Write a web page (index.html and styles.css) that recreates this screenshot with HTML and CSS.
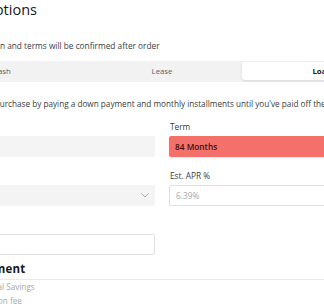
FILE: index.html
```html
<!DOCTYPE html>
<html lang="en">
<head>
    <meta charset="UTF-8">
    <meta name="viewport" content="width=device-width, initial-scale=1.0">
    <title>Payment Options</title>
    <link rel="stylesheet" href="styles.css">
</head>
<body>
    <div class="page">
        <h1>Payment Options</h1>
        <p class="note">Price, payment option and terms will be confirmed after order</p>

        <div class="tabs">
            <button class="tab">Cash</button>
            <button class="tab">Lease</button>
            <button class="tab active">Loan</button>
        </div>

        <p class="desc">Finance the vehicle purchase by paying a down payment and monthly installments until you've paid off the loan.</p>

        <div class="form-grid">
            <div class="field">
                <label>Price</label>
                <div class="input disabled"></div>
            </div>
            <div class="field">
                <label>Term</label>
                <div class="input error">84 Months</div>
            </div>
            <div class="field">
                <label>Credit</label>
                <div class="input select">
                    <svg class="chevron" width="8" height="5" viewBox="0 0 8 5"><path d="M0.5 0.5 L4 4 L7.5 0.5" fill="none" stroke="#9a9a9a" stroke-width="0.8"/></svg>
                </div>
            </div>
            <div class="field">
                <label>Est. APR %</label>
                <div class="input bordered placeholder">6.39%</div>
            </div>
            <div class="field">
                <label>Down</label>
                <div class="input bordered"></div>
            </div>
        </div>

        <h2>Monthly Payment</h2>
        <ul class="summary">
            <li>Include Your Potential Savings</li>
            <li>Includes all destination fee</li>
        </ul>
    </div>
</body>
</html>
```

FILE: styles.css
```css
body {
    margin: 0;
    font-family: 'Open Sans', sans-serif;
    color: #222;
    background: #fff;
    overflow: hidden;
}

.page {
    width: 484px;
    margin-left: -80px;
}

h1 {
    margin: 0;
    font-size: 14.5px;
    font-weight: 500;
    line-height: 20px;
    color: #171a20;
}

.note {
    margin: 19px 0 0;
    font-size: 8.3px;
    line-height: 14px;
    color: #393c41;
}

/* tabs */
.tabs {
    display: flex;
    margin-top: 8px;
    padding: 1px 2px 2px;
    background: #f2f2f2;
    height: 18px;
}

.tab {
    flex: 1;
    border: none;
    background: none;
    font-family: inherit;
    font-size: 7.8px;
    color: #5c5e62;
    padding: 0;
    border-radius: 3px;
}

.tab.active {
    background: #fff;
    color: #171a20;
    font-weight: 700;
    box-shadow: 0 1px 3px rgba(0, 0, 0, 0.12);
}

.desc {
    margin: 15px 0 0;
    font-size: 8.2px;
    line-height: 14px;
    color: #393c41;
    white-space: nowrap;
}

/* form */
.form-grid {
    display: grid;
    grid-template-columns: 1fr 1fr;
    column-gap: 14px;
    row-gap: 12px;
    margin-top: 9px;
}

.field label {
    display: block;
    font-size: 8.3px;
    line-height: 13px;
    color: #393c41;
    padding-left: 1px;
    margin-bottom: 3px;
}

.input {
    height: 21px;
    box-sizing: border-box;
    border-radius: 2px;
    background: #f4f4f4;
    font-size: 8.3px;
    line-height: 21px;
    padding: 0 6px;
    position: relative;
}

.input.error {
    background: #f4706b;
    color: #3a1311;
    font-weight: 600;
    box-shadow: 0 1px 2px rgba(0, 0, 0, 0.08);
}

.input.bordered {
    background: #fff;
    border: 1px solid #e0e0e0;
    line-height: 19px;
}

.input.placeholder {
    color: #a8a8a8;
}

.chevron {
    position: absolute;
    right: 6px;
    top: 8px;
}

h2 {
    margin: 6px 0 0;
    font-size: 11.5px;
    font-weight: 700;
    letter-spacing: 0.2px;
    line-height: 16px;
    color: #171a20;
    padding-bottom: 2px;
    border-bottom: 1px solid #eaeaea;
}

.summary {
    list-style: none;
    margin: 0;
    padding: 0;
    font-size: 8.2px;
    line-height: 14px;
    color: #a8a8a8;
}
```
